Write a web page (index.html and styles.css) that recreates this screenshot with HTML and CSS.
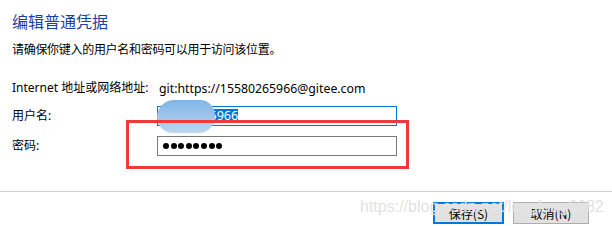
FILE: index.html
```html
<!DOCTYPE html>
<html lang="zh-CN">
<head>
<meta charset="utf-8">
<link rel="stylesheet" href="styles.css">
</head>
<body>
<div class="dialog">
  <div class="content">
    <h1 class="title">编辑普通凭据</h1>
    <p class="desc">请确保你键入的用户名和密码可以用于访问该位置。</p>
    <div class="form">
      <div class="row row-addr">
        <span class="label">Internet 地址或网络地址:</span>
        <span class="value">git:https://15580265966@gitee.com</span>
      </div>
      <div class="row row-user">
        <span class="label">用户名:</span>
        <span class="field field-focus"><span class="sel">15580265966</span></span>
      </div>
      <div class="row row-pass">
        <span class="label">密码:</span>
        <span class="field"><span class="dots"><i></i><i></i><i></i><i></i><i></i><i></i><i></i><i></i></span></span>
      </div>
    </div>
  </div>
  <div class="footer">
    <button class="btn btn-default">保存(S)</button>
    <button class="btn">取消(N)</button>
  </div>
  <div class="blob"></div>
  <div class="mark"></div>
  <div class="watermark">https://blog.csdn.net/longlong6682</div>
</div>
</body>
</html>
```
FILE: styles.css
```css
html, body {
  margin: 0;
  padding: 0;
  background: #fff;
}
body {
  width: 612px;
  height: 226px;
  overflow: hidden;
  font-family: "Noto Sans", "Noto Sans CJK SC", sans-serif;
  color: #000;
}
.dialog {
  position: relative;
  width: 612px;
  height: 226px;
  display: flex;
  flex-direction: column;
}
.content {
  height: 191px;
  padding: 10px 0 0 12px;
  box-sizing: border-box;
}
.title {
  margin: 0;
  font-size: 16px;
  line-height: 22px;
  font-weight: normal;
  color: #1d3fa3;
  font-family: "Noto Sans CJK SC", sans-serif;
}
.desc {
  margin: 8px 0 0;
  font-size: 12px;
  line-height: 18px;
  font-family: "Noto Sans CJK SC", sans-serif;
  letter-spacing: -0.3px;
}
.form {
  margin-top: 20px;
  font-size: 12px;
}
.row {
  display: grid;
  grid-template-columns: 145px 240px;
  align-items: center;
  height: 20px;
}
.row-user { margin-top: 8px; }
.row-pass { margin-top: 10px; }
.label {
  line-height: 20px;
}
.value {
  padding-left: 2px;
  font-size: 12.3px;
}
.field {
  box-sizing: border-box;
  height: 20px;
  border: 1px solid #7a7a7a;
  display: flex;
  align-items: center;
  padding-left: 1px;
}
.field-focus {
  border-color: #0078d7;
}
.sel {
  background: #0078d7;
  color: #fff;
  font-size: 12.6px;
  line-height: 14px;
}
.dots {
  display: flex;
  gap: 1.6px;
  padding-left: 4px;
}
.dots i {
  display: block;
  width: 6px;
  height: 6px;
  border-radius: 50%;
  background: #000;
}
.footer {
  flex: 1;
  border-top: 1px solid #cfcfcf;
  display: flex;
  justify-content: flex-end;
  align-items: flex-start;
  gap: 9px;
  padding: 10px 23px 0 0;
}
.btn {
  box-sizing: border-box;
  height: 22px;
  width: 76px;
  border: 1px solid #adadad;
  background: #e1e1e1;
  font-family: "Noto Sans CJK SC", sans-serif;
  font-size: 12px;
  padding: 0;
  color: #000;
}
.btn-default {
  width: 71px;
  border: 2px solid #0078d7;
}
.blob {
  position: absolute;
  left: 157px;
  top: 100px;
  width: 58px;
  height: 33px;
  border-radius: 17px 15px 16px 16px;
  background: linear-gradient(#80b5e7, #bcd7f0);
}
.mark {
  position: absolute;
  left: 126px;
  top: 120px;
  width: 283px;
  height: 49px;
  box-sizing: border-box;
  border: 3px solid #f03a3a;
}
.watermark {
  position: absolute;
  left: 360px;
  top: 198px;
  font-family: "Liberation Sans", sans-serif;
  font-size: 16px;
  line-height: 18px;
  color: rgba(215, 215, 215, 0.75);
  text-shadow: 0 0 1px rgba(255, 255, 255, 0.9);
  white-space: nowrap;
}
```
